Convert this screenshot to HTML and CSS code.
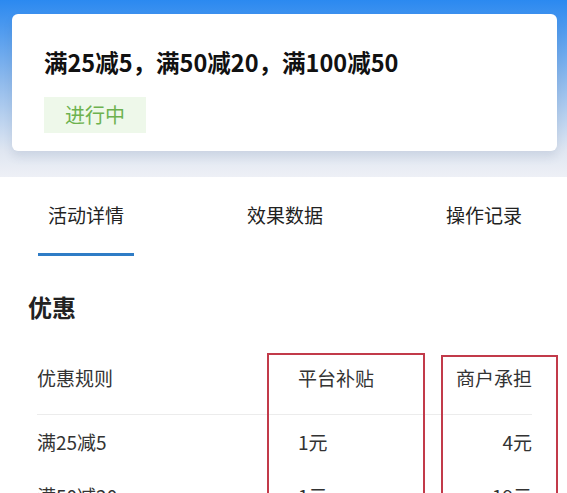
FILE: index.html
```html
<!DOCTYPE html>
<html lang="zh-CN">
<head>
    <meta charset="UTF-8">
    <meta name="viewport" content="width=device-width, initial-scale=1.0">
    <title>活动详情</title>
    <link rel="stylesheet" href="styles.css">
</head>
<body>
    <div class="hero">
        <div class="card">
            <div class="card-title">满25减5，满50减20，满100减50</div>
            <span class="badge">进行中</span>
        </div>
    </div>

    <div class="tabs">
        <div class="tab active">活动详情</div>
        <div class="tab">效果数据</div>
        <div class="tab">操作记录</div>
    </div>

    <div class="section-title">优惠</div>

    <div class="table-wrap">
        <div class="row head">
            <div class="cell rule">优惠规则</div>
            <div class="cell platform">平台补贴</div>
            <div class="cell merchant">商户承担</div>
        </div>
        <div class="row">
            <div class="cell rule">满25减5</div>
            <div class="cell platform">1元</div>
            <div class="cell merchant">4元</div>
        </div>
        <div class="row">
            <div class="cell rule">满50减20</div>
            <div class="cell platform">1元</div>
            <div class="cell merchant">19元</div>
        </div>

        <!-- highlight boxes drawn over the columns -->
        <div class="mark mark-platform"></div>
        <div class="mark mark-merchant"></div>
    </div>
</body>
</html>
```

FILE: styles.css
```css
body {
    margin: 0;
    overflow: hidden;
    font-family: "Noto Sans CJK SC", "Noto Sans", sans-serif;
    background: #ffffff;
    color: #222;
}

.hero {
    padding: 14px 10px 26px 12px;
    background: linear-gradient(to bottom, #2b89f0 0%, #8db9ec 45%, #dfe6f1 85%, #eef0f6 100%);
}

.card {
    background: #ffffff;
    border-radius: 6px;
    padding: 32px 32px 18px 32px;
    box-shadow: 0 6px 10px rgba(60, 80, 120, 0.12);
}

.card-title {
    font-size: 23.5px;
    line-height: 32px;
    font-weight: bold;
    color: #111;
}

.badge {
    display: inline-block;
    margin-top: 19px;
    padding: 0 21px;
    height: 36px;
    line-height: 36px;
    font-size: 20px;
    color: #6db24f;
    background: #eef8ea;
}

.tabs {
    display: flex;
    justify-content: space-between;
    padding: 0 35px 0 38px;
}

.tab {
    width: 96px;
    text-align: center;
    font-size: 19px;
    line-height: 28px;
    padding: 24px 0 27px;
    color: #222;
}

.tab.active {
    padding-bottom: 24px;
    border-bottom: 3px solid #2f7cc6;
}

.section-title {
    margin: 35px 0 0 28px;
    font-size: 24px;
    line-height: 32px;
    font-weight: bold;
    color: #222;
}

.table-wrap {
    position: relative;
    margin: 28px 35px 0 37px;
}

.row {
    display: flex;
    font-size: 19px;
    line-height: 30px;
    padding: 12px 0;
    color: #333;
}

.row.head {
    padding: 12px 0 21px;
    border-bottom: 1px solid #ececec;
}

.cell.rule {
    width: 261px;
}

.cell.platform {
    width: 100px;
}

.cell.merchant {
    flex: 1;
    text-align: right;
}

.mark {
    position: absolute;
    top: 2px;
    height: 300px;
    border: 2px solid #c23a4a;
}

.mark-platform {
    left: 230px;
    width: 154px;
}

.mark-merchant {
    left: 404px;
    width: 113px;
    top: 4px;
}
```
